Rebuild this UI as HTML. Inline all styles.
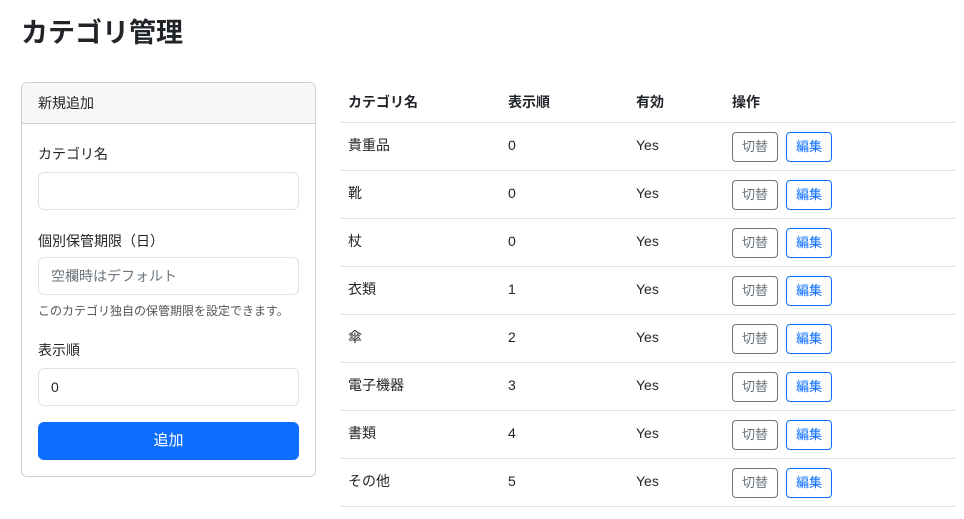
<!DOCTYPE html>
<html><head><meta charset="utf-8"><style>
*{box-sizing:border-box;margin:0;padding:0}
body{width:964px;height:519px;background:#fff;font-family:"Liberation Sans","Noto Sans CJK JP",sans-serif;color:#212529;font-size:14px;position:relative;overflow:hidden}
h1{position:absolute;left:21px;top:13px;font-size:27px;font-weight:700;line-height:40px}
.card{position:absolute;left:21px;top:82px;width:295px;height:395px;border:1px solid #d0d1d2;border-radius:6px;overflow:hidden}
.ch{height:41px;background:#f7f7f7;border-bottom:1px solid #d0d1d2;padding:0 16px;line-height:40px;font-size:14px}
.lbl{position:absolute;left:16px;font-size:14px}
.inp{position:absolute;left:16px;width:261px;height:38px;border:1px solid #dee2e6;border-radius:6px;padding:0 12px;line-height:36px;font-size:14px}
.help{position:absolute;left:16px;font-size:12px;color:#555}
.btn{position:absolute;left:16px;top:339px;width:261px;height:38px;background:#0d6efd;color:#fff;border-radius:6px;text-align:center;line-height:38px;font-size:15px}
.tbl{position:absolute;left:340px;top:82px;width:616px}
.row{height:48px;border-bottom:1px solid #dee2e6;position:relative}
.row.h{height:41px;font-weight:700}
.row span{position:absolute;line-height:44px}
.row.h span{line-height:40px}
.c1{left:8px}.c2{left:168px}.c3{left:296px}.c4{left:392px}
.b{position:absolute;top:9px;height:30px;width:46px;border:1px solid;border-radius:4px;font-size:13px;text-align:center;line-height:28px}
.g{left:392px;border-color:#6c757d;color:#6c757d}
.e{left:446px;border-color:#0d6efd;color:#0d6efd}
</style></head><body>
<h1>カテゴリ管理</h1>
<div class="card">
<div class="ch">新規追加</div>
<div class="lbl" style="top:61px">カテゴリ名</div>
<div class="inp" style="top:89px"></div>
<div class="lbl" style="top:148px">個別保管期限（日）</div>
<div class="inp" style="top:174px;color:#6c757d">空欄時はデフォルト</div>
<div class="help" style="top:219px">このカテゴリ独自の保管期限を設定できます。</div>
<div class="lbl" style="top:257px">表示順</div>
<div class="inp" style="top:285px">0</div>
<div class="btn">追加</div>
</div>
<div class="tbl">
<div class="row h"><span class="c1">カテゴリ名</span><span class="c2">表示順</span><span class="c3">有効</span><span class="c4">操作</span></div>
<div class="row"><span class="c1">貴重品</span><span class="c2">0</span><span class="c3">Yes</span><div class="b g">切替</div><div class="b e">編集</div></div>
<div class="row"><span class="c1">靴</span><span class="c2">0</span><span class="c3">Yes</span><div class="b g">切替</div><div class="b e">編集</div></div>
<div class="row"><span class="c1">杖</span><span class="c2">0</span><span class="c3">Yes</span><div class="b g">切替</div><div class="b e">編集</div></div>
<div class="row"><span class="c1">衣類</span><span class="c2">1</span><span class="c3">Yes</span><div class="b g">切替</div><div class="b e">編集</div></div>
<div class="row"><span class="c1">傘</span><span class="c2">2</span><span class="c3">Yes</span><div class="b g">切替</div><div class="b e">編集</div></div>
<div class="row"><span class="c1">電子機器</span><span class="c2">3</span><span class="c3">Yes</span><div class="b g">切替</div><div class="b e">編集</div></div>
<div class="row"><span class="c1">書類</span><span class="c2">4</span><span class="c3">Yes</span><div class="b g">切替</div><div class="b e">編集</div></div>
<div class="row"><span class="c1">その他</span><span class="c2">5</span><span class="c3">Yes</span><div class="b g">切替</div><div class="b e">編集</div></div>
</div>
</body></html>
